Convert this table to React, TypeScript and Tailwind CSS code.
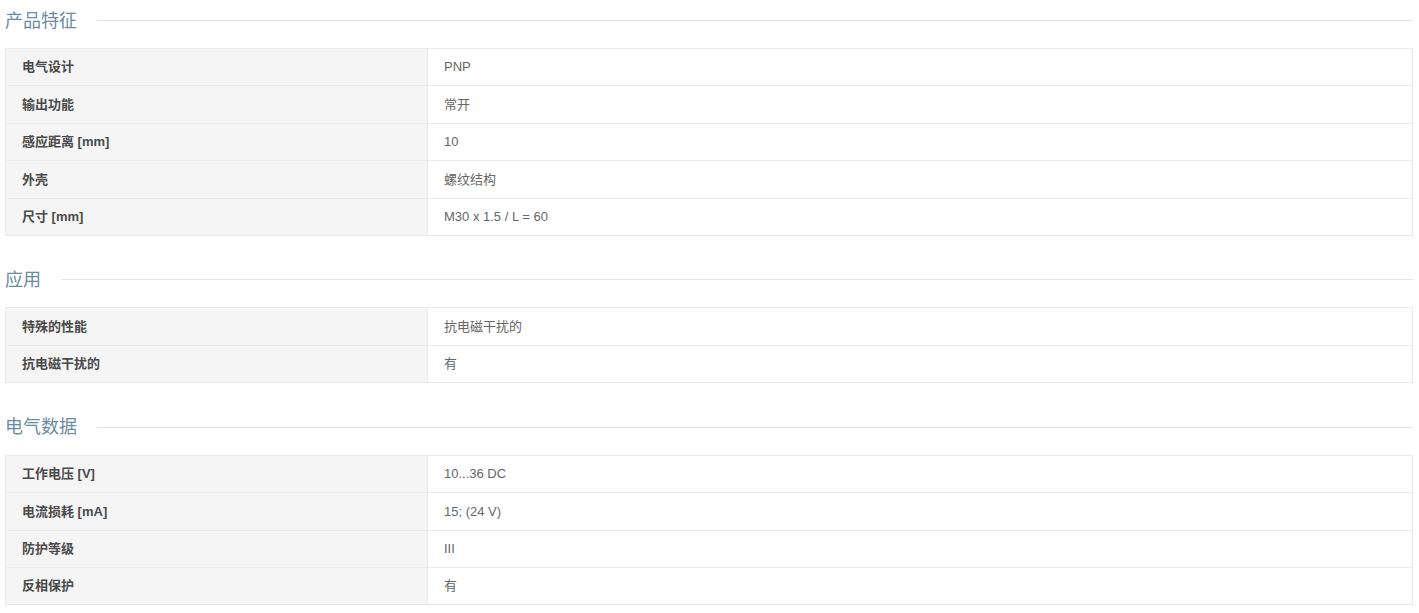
const sections = [
  {
    title: "产品特征",
    rows: [
      ["电气设计", "PNP"],
      ["输出功能", "常开"],
      ["感应距离 [mm]", "10"],
      ["外壳", "螺纹结构"],
      ["尺寸 [mm]", "M30 x 1.5 / L = 60"],
    ],
  },
  {
    title: "应用",
    rows: [
      ["特殊的性能", "抗电磁干扰的"],
      ["抗电磁干扰的", "有"],
    ],
  },
  {
    title: "电气数据",
    rows: [
      ["工作电压 [V]", "10...36 DC"],
      ["电流损耗 [mA]", "15; (24 V)"],
      ["防护等级", "III"],
      ["反相保护", "有"],
    ],
  },
];

export default function App() {
  return (
    <div className="w-[1419px] bg-white pl-[5px] pr-[6px] font-['Arial','Liberation_Sans','Noto_Sans_CJK_SC',sans-serif]">
      {sections.map((s, idx) => (
        <Section key={idx} title={s.title} rows={s.rows} first={idx === 0} />
      ))}
    </div>
  );
}

function Section({
  title,
  rows,
  first,
}: {
  title: string;
  rows: string[][];
  first: boolean;
}) {
  return (
    <section className={first ? "" : "mt-[23.5px]"}>
      <div className="flex h-[41px] items-center gap-5">
        <h3 className="text-[18px] leading-none text-[#6b8ba4] whitespace-nowrap">{title}</h3>
        <div className="h-px flex-1 bg-[#e5e5e5]" />
      </div>
      <div className="mt-[7px] border-x border-b border-[#e8e8e8]">
        {rows.map((r, i) => (
          <div
            key={i}
            className="grid h-[37.4px] grid-cols-[422px_1fr] border-t border-[#ebebeb] text-[13px]"
          >
            <div className="flex items-center bg-[#f5f5f5] pl-4 font-bold text-[#4a4a4a] border-r border-[#ebebeb]">
              {r[0]}
            </div>
            <div className="flex items-center pl-4 text-[#666]">{r[1]}</div>
          </div>
        ))}
      </div>
    </section>
  );
}
